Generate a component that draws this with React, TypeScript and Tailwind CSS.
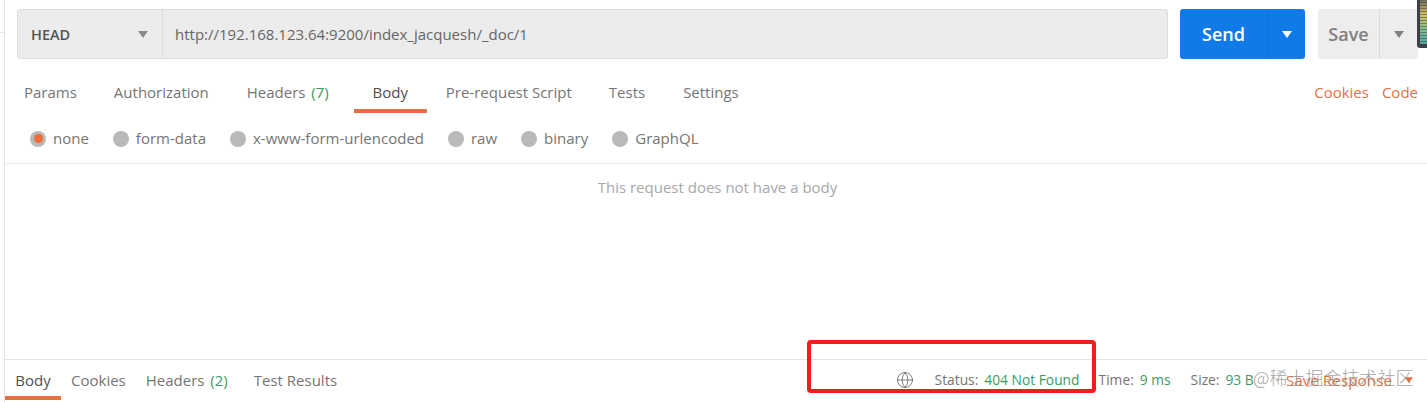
import { Globe } from 'lucide-react';

const Caret = ({ className }: { className: string }) => (
    <svg width="10" height="7" viewBox="0 0 10 7" className={className}>
        <path d="M0 0h10L5 7z" fill="currentColor" />
    </svg>
);

const bodyTypes = [
    { label: 'none', active: true },
    { label: 'form-data' },
    { label: 'x-www-form-urlencoded' },
    { label: 'raw' },
    { label: 'binary' },
    { label: 'GraphQL' },
];

export default function App() {
    return (
        <div className="relative w-[1427px] h-[402px] overflow-hidden bg-white font-['Open_Sans',sans-serif] text-[15px] text-[#757575]">
            <div className="ml-[4px] h-full border-l border-[#e3e3e3] flex flex-col">
                {/* URL BAR */}
                <div className="flex pl-[12px] pt-[9px] h-[59px]">
                    <div className="w-[1151px] h-[50px] flex bg-[#ececec] border border-[#dcdcdc] rounded-[3px]">
                        <div className="w-[145px] flex items-center justify-between pl-[13px] pr-[14px] pt-[1px] border-r border-[#dcdcdc]">
                            <span className="text-[14.5px] font-semibold text-[#555]">HEAD</span>
                            <Caret className="text-[#8a8a8a]" />
                        </div>
                        <div className="flex items-center pl-[12px] pt-[1px] text-[#666]">http://192.168.123.64:9200/index_jacquesh/_doc/1</div>
                    </div>
                    <div className="ml-[12px] w-[125px] h-[50px] flex bg-[#0f7ae8] rounded-[3px] text-white">
                        <div className="w-[88px] flex items-center justify-center text-[18px] font-semibold border-r border-[#0e75e0]">Send</div>
                        <div className="flex-1 flex items-center justify-center">
                            <Caret className="text-white" />
                        </div>
                    </div>
                    <div className="ml-[13px] w-[100px] h-[50px] flex bg-[#ededed] rounded-[3px] text-[#808080]">
                        <div className="w-[62px] flex items-center justify-center text-[18px] font-semibold border-r border-[#dcdcdc]">Save</div>
                        <div className="flex-1 flex items-center justify-center">
                            <Caret className="text-[#808080]" />
                        </div>
                    </div>
                </div>

                {/* TABS */}
                <div className="flex items-start h-[54px] pl-[19px] pr-[9px]">
                    <div className="pt-[22px] mr-[37px]">Params</div>
                    <div className="pt-[22px] mr-[38px]">Authorization</div>
                    <div className="pt-[22px] mr-[25px]">Headers <span className="ml-[2px] text-[#3d9a63]">(7)</span></div>
                    <div className="pt-[22px] w-[73px] h-[54px] text-center text-[#505050] border-b-[4px] border-[#e8703f]">Body</div>
                    <div className="pt-[22px] ml-[19px] mr-[37px]">Pre-request Script</div>
                    <div className="pt-[22px] mr-[38px]">Tests</div>
                    <div className="pt-[22px]">Settings</div>
                    <div className="pt-[22px] ml-auto mr-[13px] text-[#e8703f]">Cookies</div>
                    <div className="pt-[22px] text-[#e8703f]">Code</div>
                </div>

                {/* BODY TYPE */}
                <div className="flex items-center gap-[24px] h-[51px] pl-[25px] pt-[1px] border-b border-[#e8e8e8]">
                    {bodyTypes.map((t) => (
                        <div key={t.label} className="flex items-center">
                            <span className="w-[16px] h-[16px] mr-[7px] rounded-full bg-[#b9b9b9] flex items-center justify-center">
                                {t.active && <span className="w-[9px] h-[9px] rounded-full bg-[#f26b3a]" />}
                            </span>
                            {t.label}
                        </div>
                    ))}
                </div>

                {/* EMPTY BODY */}
                <div className="flex-1 pt-[12px] pl-[3px] text-center text-[#a8a8a8]">This request does not have a body</div>

                {/* RESPONSE BAR */}
                <div className="h-[43px] flex items-start border-t border-[#e3e3e3]">
                    <div className="pt-[9px] w-[56px] h-[40px] text-center text-[#505050] border-b-[4px] border-[#e8703f]">Body</div>
                    <div className="pt-[9px] ml-[10px]">Cookies</div>
                    <div className="pt-[9px] ml-[20px]">Headers <span className="ml-[2px] text-[#3d9a63]">(2)</span></div>
                    <div className="pt-[9px] ml-[26px]">Test Results</div>
                    <div className="ml-auto flex items-center h-[40px] text-[13.8px]">
                        <Globe size={18} strokeWidth={1} className="mr-[21px] text-[#555]" />
                        <span className="mr-[6px]">Status:</span>
                        <span className="mr-[19px] text-[#3d9a63]">404 Not Found</span>
                        <span className="mr-[6px]">Time:</span>
                        <span className="mr-[20px] text-[#3d9a63]">9 ms</span>
                        <span className="mr-[6px]">Size:</span>
                        <span className="mr-[32px] text-[#3d9a63]">93 B</span>
                        <span className="mr-[13px] text-[15.3px] text-[#e8703f]">Save Response</span>
                        <Caret className="mr-[14px] w-[8px] h-[6px] text-[#e8703f]" />
                    </div>
                </div>
            </div>

            {/* overlays */}
            <div className="absolute left-0 top-[32px] w-[4px] h-px bg-[#e3e3e3]" />
            <div className="absolute left-[1417px] top-0 w-[10px] h-[48px] rounded-bl-[3px] bg-[#3d4048]">
                <div className="ml-[3px] h-[44px] [background-image:repeating-linear-gradient(to_bottom,transparent_0,transparent_2px,rgba(60,60,70,0.5)_2px,rgba(60,60,70,0.5)_3px),linear-gradient(to_bottom,#6b6b58,#d8c060,#80c090,#50a8a0)]" />
            </div>
            <div className="absolute left-[807px] top-[340px] w-[289px] h-[53px] rounded-[4px] border-[4px] border-[#f01f1c]" />
            <div className="absolute left-[1253px] top-[364px] text-[18px] font-light text-[#8a8a8a]/80 font-['Noto_Sans_CJK_SC',sans-serif]">@稀土掘金技术社区</div>
        </div>
    );
}
